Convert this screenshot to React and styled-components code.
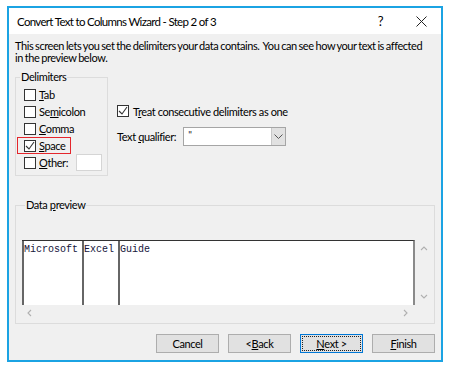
import styled, { createGlobalStyle } from "styled-components";

const Global = createGlobalStyle`
  html, body {
    margin: 0;
    background: #ffffff;
  }
  * { box-sizing: border-box; }
`;

const UI = `Lato, "Noto Sans", sans-serif`;

const Window = styled.div`
  width: 436px;
  height: 356px;
  margin: 6px 0 0 7px;
  border: 2px solid #1ba3e3;
  background: #f0f0f0;
  display: flex;
  flex-direction: column;
  font-family: ${UI};
  font-size: 11px;
  letter-spacing: -0.4px;
  color: #000;
`;

const TitleBar = styled.div`
  height: 26px;
  background: #fff;
  display: flex;
  align-items: center;
  padding: 0 14px 0 8px;
  font-size: 11.5px;
  letter-spacing: -0.68px;
`;

const Title = styled.div`
  flex: 1;
`;

const Help = styled.span`
  font-size: 13px;
  margin-right: 33px;
`;

const Body = styled.div`
  flex: 1;
  display: flex;
  flex-direction: column;
  padding: 6px 6px 7px 6px;
`;

const Intro = styled.p`
  margin: 0;
  line-height: 12px;
  white-space: nowrap;
  letter-spacing: -0.42px;
  word-spacing: -0.6px;
`;

const TopRow = styled.div`
  display: flex;
  margin-top: 6px;
  height: 106px;
`;

const Group = styled.fieldset`
  margin: 0;
  padding: ${(p) => p.$pad};
  border: 1px solid #dcdcdc;
  width: ${(p) => p.$w};
  min-width: 0;
`;

const Legend = styled.legend`
  margin-left: 3px;
  padding: 0 1px;
  line-height: 14px;
`;

const List = styled.div`
  display: flex;
  flex-direction: column;
`;

const Row = styled.label`
  display: flex;
  align-items: center;
  gap: 3px;
  height: 17px;
  width: fit-content;
  padding: 0 5px 0 6px;
  border: 1px solid ${(p) => (p.$mark ? "#e4262c" : "transparent")};
`;

const Box = styled.span`
  width: 12px;
  height: 12px;
  border: 1px solid #333;
  background: #fff;
  display: flex;
  align-items: center;
  justify-content: center;
`;

const U = styled.span`
  text-decoration: underline;
  text-underline-offset: 1px;
`;

const OtherInput = styled.span`
  width: 26px;
  height: 17px;
  margin-left: 5px;
  background: #fff;
  border: 1px solid #d5d5d5;
`;

const Options = styled.div`
  display: flex;
  flex-direction: column;
  padding: 33px 0 0 9px;
`;

const OptRow = styled.div`
  display: flex;
  align-items: center;
  gap: 4px;
  height: 16px;
`;

const QualRow = styled.div`
  display: flex;
  align-items: center;
  margin-top: 8px;
  gap: 7px;
`;

const Select = styled.div`
  width: 103px;
  height: 19px;
  border: 1px solid #a5a5a5;
  background: #fff;
  display: flex;
  align-items: stretch;
`;

const SelectValue = styled.div`
  flex: 1;
  padding: 0 0 0 4px;
  font-size: 10px;
  line-height: 12px;
  color: #222;
`;

const SelectBtn = styled.div`
  width: 14px;
  background: #e1e1e1;
  border-left: 1px solid #c8c8c8;
  display: flex;
  align-items: center;
  justify-content: center;
`;

const PreviewGroup = styled(Group)`
  margin-top: 22px;
`;

const PreviewGrid = styled.div`
  display: grid;
  grid-template-columns: 1fr 17px;
  grid-template-rows: 65px 15px;
`;

const Sheet = styled.div`
  background: #fff;
  border-top: 1px solid #333;
  border-right: 2px solid #8a8a8a;
  display: grid;
  grid-template-columns: 60px 36px 1fr;
`;

const Col = styled.div`
  border-left: 2px solid #666;
  font-family: "Liberation Mono", "Courier New", monospace;
  font-size: 10px;
  letter-spacing: 0;
  line-height: 12px;
  padding-top: 3px;
  color: #14143a;
  white-space: pre;
`;

const ScrollV = styled.div`
  display: flex;
  flex-direction: column;
  justify-content: space-between;
  align-items: center;
  padding: 4px 0 4px;
`;

const ScrollH = styled.div`
  display: flex;
  justify-content: space-between;
  align-items: center;
  padding: 0 6px 0 4px;
`;

const Buttons = styled.div`
  display: flex;
  justify-content: flex-end;
  gap: 9px;
  margin-top: 10px;
`;

const Button = styled.div`
  width: 63px;
  height: 19px;
  background: #e1e1e1;
  border: 1px solid ${(p) => (p.$focus ? "#0078d7" : "#adadad")};
  display: flex;
  align-items: center;
  justify-content: center;
  padding: 1px;
`;

const Focus = styled.div`
  flex: 1;
  align-self: stretch;
  display: flex;
  align-items: center;
  justify-content: center;
  outline: 1px dotted ${(p) => (p.$on ? "#222" : "transparent")};
  outline-offset: -1px;
`;

const Check = () => (
  <svg width="10" height="10" viewBox="0 0 10 10">
    <path d="M1 5 L4 8 L9 1" fill="none" stroke="#333" strokeWidth="1.1" />
  </svg>
);

const Arrow = ({ d }) => (
  <svg width="8" height="8" viewBox="0 0 8 8">
    <path d={d} fill="none" stroke="#b0b0b0" strokeWidth="1.1" />
  </svg>
);

const CheckBox = ({ on }) => <Box>{on && <Check />}</Box>;

const delimiters = [
  { pre: "", u: "T", post: "ab" },
  { pre: "Se", u: "m", post: "icolon" },
  { pre: "", u: "C", post: "omma" },
  { pre: "", u: "S", post: "pace", on: true, mark: true },
  { pre: "", u: "O", post: "ther:", other: true },
];

const buttons = [
  { label: <>Cancel</> },
  { label: <>&lt; <U>B</U>ack</> },
  { label: <><U>N</U>ext &gt;</>, focus: true },
  { label: <><U>F</U>inish</> },
];

export default function App() {
  return (
    <>
      <Global />
      <Window>
        <TitleBar>
          <Title>Convert Text to Columns Wizard - Step 2 of 3</Title>
          <Help>?</Help>
          <svg width="11" height="11" viewBox="0 0 11 11">
            <path d="M0.5 0.5 L10.5 10.5 M10.5 0.5 L0.5 10.5" stroke="#222" strokeWidth="1" />
          </svg>
        </TitleBar>
        <Body>
          <Intro>
            This screen lets you set the delimiters your data contains.&nbsp; You can see how your text is affected
            <br />
            in the preview below.
          </Intro>
          <TopRow>
            <Group $w="93px" $pad="2px 0 0 1px">
              <Legend>Delimiters</Legend>
              <List>
                {delimiters.map((d, i) => (
                  <Row key={i} $mark={d.mark}>
                    <CheckBox on={d.on} />
                    <span>
                      {d.pre}
                      <U>{d.u}</U>
                      {d.post}
                    </span>
                    {d.other && <OtherInput />}
                  </Row>
                ))}
              </List>
            </Group>
            <Options>
              <OptRow>
                <CheckBox on />
                <span>
                  T<U>r</U>eat consecutive delimiters as one
                </span>
              </OptRow>
              <QualRow>
                <span>
                  Text <U>q</U>ualifier:
                </span>
                <Select>
                  <SelectValue>"</SelectValue>
                  <SelectBtn>
                    <svg width="9" height="6" viewBox="0 0 9 6">
                      <path d="M0.5 0.5 L4.5 4.5 L8.5 0.5" fill="none" stroke="#555" strokeWidth="1" />
                    </svg>
                  </SelectBtn>
                </Select>
              </QualRow>
            </Options>
          </TopRow>
          <PreviewGroup $w="100%" $pad="28px 2px 3px 6px">
            <Legend>
              Data <U>p</U>review
            </Legend>
            <PreviewGrid>
              <Sheet>
                <Col>Microsoft</Col>
                <Col>Excel</Col>
                <Col>Guide</Col>
              </Sheet>
              <ScrollV>
                <Arrow d="M1 6 L4 3 L7 6" />
                <Arrow d="M1 2 L4 5 L7 2" />
              </ScrollV>
              <ScrollH>
                <Arrow d="M5 1 L2 4 L5 7" />
                <Arrow d="M3 1 L6 4 L3 7" />
              </ScrollH>
            </PreviewGrid>
          </PreviewGroup>
          <Buttons>
            {buttons.map((b, i) => (
              <Button key={i} $focus={b.focus}>
                <Focus $on={b.focus}>{b.label}</Focus>
              </Button>
            ))}
          </Buttons>
        </Body>
      </Window>
    </>
  );
}
